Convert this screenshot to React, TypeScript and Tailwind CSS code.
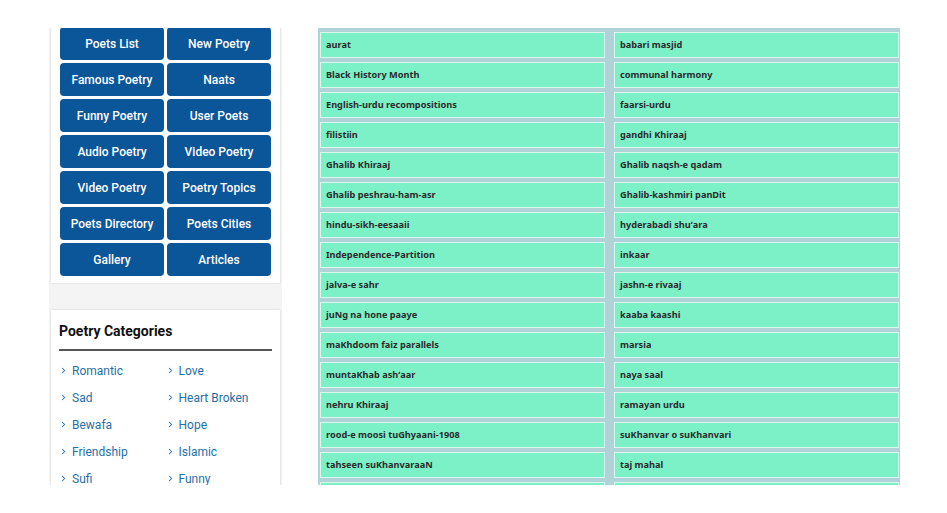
import { ChevronRight } from "lucide-react";

const links = [
  ["Poets List", "New Poetry"],
  ["Famous Poetry", "Naats"],
  ["Funny Poetry", "User Poets"],
  ["Audio Poetry", "Video Poetry"],
  ["Video Poetry", "Poetry Topics"],
  ["Poets Directory", "Poets Cities"],
  ["Gallery", "Articles"],
];

const categories = [
  ["Romantic", "Love"],
  ["Sad", "Heart Broken"],
  ["Bewafa", "Hope"],
  ["Friendship", "Islamic"],
  ["Sufi", "Funny"],
];

// last row only peeks in at the bottom edge, so it has no label
const topics = [
  ["aurat", "babari masjid"],
  ["Black History Month", "communal harmony"],
  ["English-urdu recompositions", "faarsi-urdu"],
  ["filistiin", "gandhi Khiraaj"],
  ["Ghalib Khiraaj", "Ghalib naqsh-e qadam"],
  ["Ghalib peshrau-ham-asr", "Ghalib-kashmiri panDit"],
  ["hindu-sikh-eesaaii", "hyderabadi shuʻara"],
  ["Independence-Partition", "inkaar"],
  ["jalva-e sahr", "jashn-e rivaaj"],
  ["juNg na hone paaye", "kaaba kaashi"],
  ["maKhdoom faiz parallels", "marsia"],
  ["muntaKhab ashʻaar", "naya saal"],
  ["nehru Khiraaj", "ramayan urdu"],
  ["rood-e moosi tuGhyaani-1908", "suKhanvar o suKhanvari"],
  ["tahseen suKhanvaraaN", "taj mahal"],
  ["", ""],
];

function Sidebar() {
  return (
    <div className="w-[233px] bg-[#f4f4f4] px-[2px] -mt-[1px]">
      {/* Quick links */}
      <div className="bg-white shadow-[0_0_2px_rgba(0,0,0,0.15)] px-[9px] pb-[7px]">
        <div className="grid grid-cols-2 gap-[3px]">
          {links.flat().map((l, i) => (
            <a
              key={i}
              href="#"
              className="flex h-[33px] items-center justify-center rounded-[4px] bg-[#0b5599] text-[12px] font-medium text-white"
            >
              {l}
            </a>
          ))}
        </div>
      </div>

      <div className="h-[27px]" />

      {/* Categories */}
      <div className="bg-white shadow-[0_0_2px_rgba(0,0,0,0.15)] px-[8px] pt-[11px] pb-4">
        <h3 className="text-[14px] font-bold text-[#111] pb-[7px] border-b-2 border-[#555]">
          Poetry Categories
        </h3>
        <div className="grid grid-cols-2 mt-[10px] gap-y-[8px] text-[12px] text-[#1f6fa8]">
          {categories.flat().map((c, i) => (
            <a key={i} href="#" className="flex h-[19px] items-center gap-[4px]">
              <ChevronRight size={9} strokeWidth={2.75} className="text-[#1f6fa8]" />
              {c}
            </a>
          ))}
        </div>
      </div>
    </div>
  );
}

function Topics() {
  return (
    <div className="w-[582px] bg-[#afd3d6] pl-[2px] pt-[4px] pb-4">
      <div className="grid grid-cols-[285px_285px] gap-x-[9px] gap-y-[4px]">
        {topics.flat().map((t, i) => (
          <a
            key={i}
            href="#"
            className="flex h-[26px] items-center border border-[#d9f7ec] bg-[#7cf1c8] pl-[5px] text-[9.2px] font-bold text-[#2b2b2b]"
          >
            {t}
          </a>
        ))}
      </div>
    </div>
  );
}

export default function App() {
  return (
    <div className="h-[513px] w-[947px] bg-white pt-[28px] font-['Roboto',sans-serif]">
      <div className="flex h-[457px] overflow-hidden">
        <div className="ml-[49px]">
          <Sidebar />
        </div>
        <div className="ml-[36px] font-['Noto_Sans',sans-serif]">
          <Topics />
        </div>
      </div>
    </div>
  );
}
